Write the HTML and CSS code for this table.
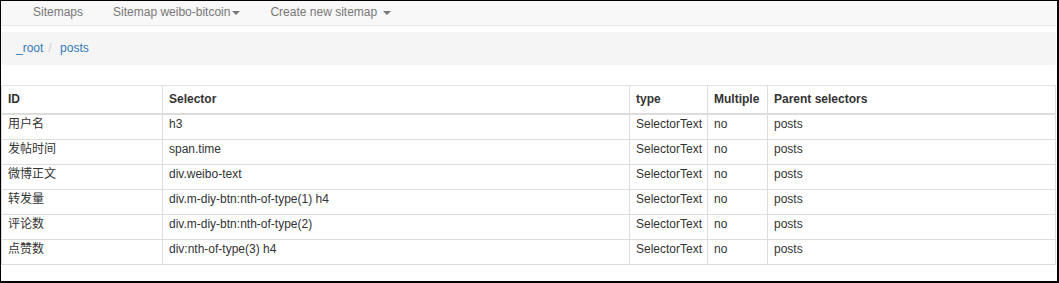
FILE: index.html
```html
<!DOCTYPE html>
<html lang="zh">
  <head>
    <meta charset="UTF-8" />
    <meta name="viewport" content="width=device-width, initial-scale=1.0" />
    <title>Web Scraper</title>
    <link rel="stylesheet" href="styles.css">
  </head>
  <body>
    <div class="frame">
      <nav class="navbar">
        <ul class="nav">
          <li><a href="#">Sitemaps</a></li>
          <li><a href="#">Sitemap weibo-bitcoin<span class="caret"></span></a></li>
          <li><a href="#">Create new sitemap <span class="caret"></span></a></li>
        </ul>
      </nav>

      <ol class="breadcrumb">
        <li><a href="#">_root</a></li>
        <li><a href="#">posts</a></li>
      </ol>

      <table class="selectors">
        <colgroup>
          <col class="col-id" />
          <col class="col-selector" />
          <col class="col-type" />
          <col class="col-multiple" />
          <col class="col-parent" />
        </colgroup>
        <thead>
          <tr>
            <th>ID</th>
            <th>Selector</th>
            <th>type</th>
            <th>Multiple</th>
            <th>Parent selectors</th>
          </tr>
        </thead>
        <tbody>
          <tr>
            <td>用户名</td>
            <td>h3</td>
            <td>SelectorText</td>
            <td>no</td>
            <td>posts</td>
          </tr>
          <tr>
            <td>发帖时间</td>
            <td>span.time</td>
            <td>SelectorText</td>
            <td>no</td>
            <td>posts</td>
          </tr>
          <tr>
            <td>微博正文</td>
            <td>div.weibo-text</td>
            <td>SelectorText</td>
            <td>no</td>
            <td>posts</td>
          </tr>
          <tr>
            <td>转发量</td>
            <td>div.m-diy-btn:nth-of-type(1) h4</td>
            <td>SelectorText</td>
            <td>no</td>
            <td>posts</td>
          </tr>
          <tr>
            <td>评论数</td>
            <td>div.m-diy-btn:nth-of-type(2)</td>
            <td>SelectorText</td>
            <td>no</td>
            <td>posts</td>
          </tr>
          <tr>
            <td>点赞数</td>
            <td>div:nth-of-type(3) h4</td>
            <td>SelectorText</td>
            <td>no</td>
            <td>posts</td>
          </tr>
        </tbody>
      </table>
    </div>
  </body>
</html>
```

FILE: styles.css
```css
html,
body {
  margin: 0;
  padding: 0;
  background-color: #fff;
}
body {
  font-family: "Liberation Sans", Arial, "Noto Sans CJK SC", sans-serif;
  font-size: 12px;
  line-height: 16px;
  color: #333;
}
a {
  text-decoration: none;
}
.frame {
  width: 1059px;
  height: 283px;
  box-sizing: border-box;
  border-style: solid;
  border-color: #000;
  border-width: 1px 2px 2px 1px;
  padding-right: 1px;
  overflow: hidden;
}

/* top navigation */
.navbar {
  height: 24px;
  background-color: #f8f8f8;
  border-bottom: 1px solid #e7e7e7;
}
.nav {
  display: flex;
  margin: 0;
  padding: 0 0 0 17px;
  list-style: none;
}
.nav a {
  display: block;
  padding: 3px 15px 5px;
  color: #777;
}
.caret {
  display: inline-block;
  width: 0;
  height: 0;
  margin-left: 2px;
  vertical-align: middle;
  border-top: 4px solid #777;
  border-left: 4px solid transparent;
  border-right: 4px solid transparent;
}

/* breadcrumb */
.breadcrumb {
  display: flex;
  height: 33px;
  box-sizing: border-box;
  margin: 6px 0 20px;
  padding: 8px 15px 9px;
  list-style: none;
  background-color: #f5f5f5;
  border-radius: 2px;
}
.breadcrumb a {
  color: #337ab7;
}
.breadcrumb li + li::before {
  content: "/\00a0";
  padding: 0 5px;
  color: #ccc;
}

/* selector table */
.selectors {
  width: 1055px;
  table-layout: fixed;
  border-collapse: collapse;
}
.col-id {
  width: 161px;
}
.col-selector {
  width: 467px;
}
.col-type {
  width: 78px;
}
.col-multiple {
  width: 60px;
}
.selectors th,
.selectors td {
  border: 1px solid #ddd;
  padding: 1px 6px 7px;
  text-align: left;
  vertical-align: top;
  white-space: nowrap;
  overflow: hidden;
}
.selectors th {
  padding: 5px 6px 6px;
  font-weight: bold;
  border-bottom-width: 2px;
}
.selectors thead tr th {
  border-top-color: #e3e3e3;
}
```
